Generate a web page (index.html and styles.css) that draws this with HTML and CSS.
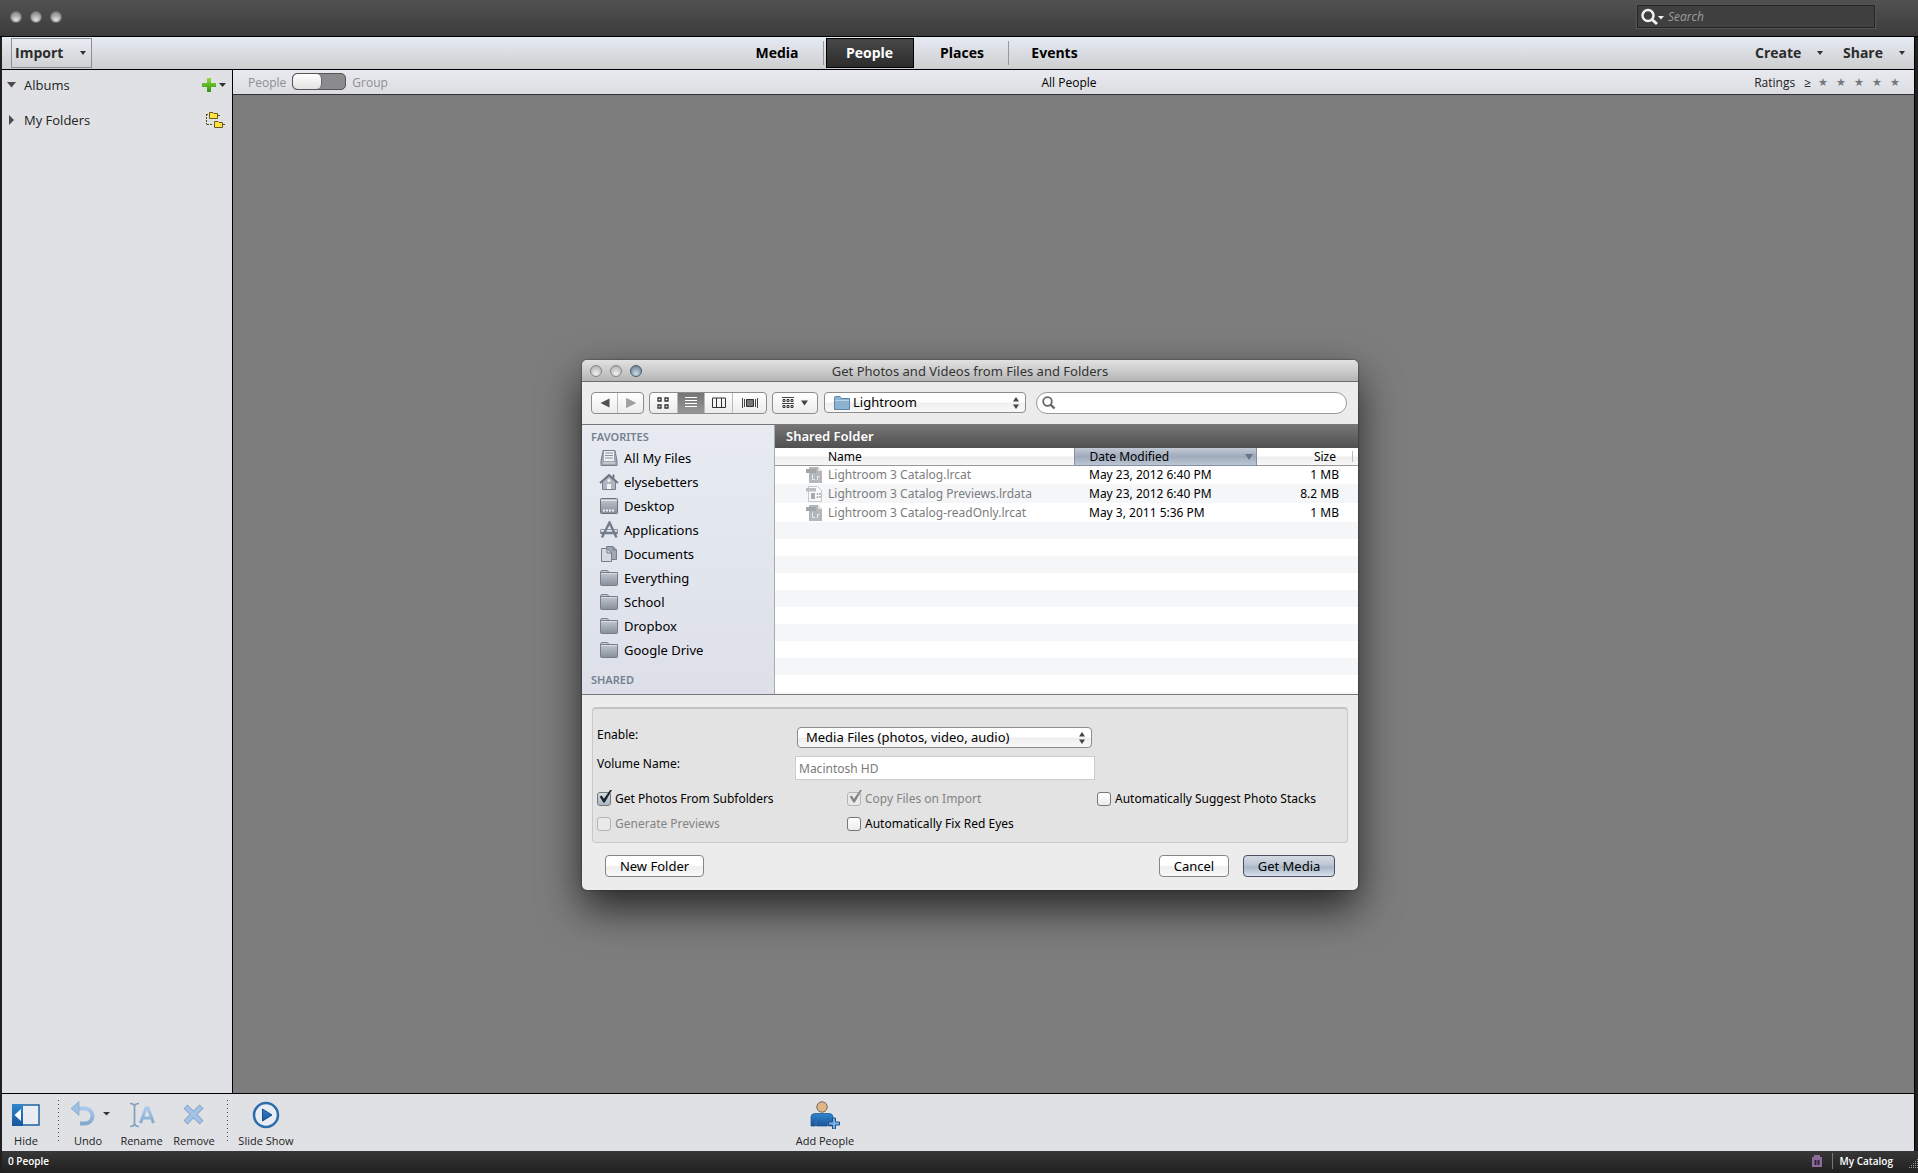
FILE: index.html
```html
<!DOCTYPE html>
<html lang="en">
<head>
<meta charset="utf-8">
<title>Organizer</title>
<link rel="stylesheet" href="styles.css">
</head>
<body>
<svg class="defs" width="0" height="0" aria-hidden="true">
  <defs>
    <linearGradient id="steel" x1="0" y1="0" x2="0" y2="1"><stop offset="0" stop-color="#c3c8d0"/><stop offset="1" stop-color="#868e9a"/></linearGradient>
    <linearGradient id="sky" x1="0" y1="0" x2="0" y2="1"><stop offset="0" stop-color="#a9c9ea"/><stop offset="1" stop-color="#85a9cf"/></linearGradient>
    <linearGradient id="deep" x1="0" y1="0" x2="0" y2="1"><stop offset="0" stop-color="#3186cf"/><stop offset="1" stop-color="#17569c"/></linearGradient>
    <linearGradient id="leaf" x1="0" y1="0" x2="0" y2="1"><stop offset="0" stop-color="#8fdc3e"/><stop offset="1" stop-color="#2f9410"/></linearGradient>
    <symbol id="folder" viewBox="0 0 20 18">
      <path d="M1.500 15.500V3.500Q1.500 1.500 3 1.500H8Q9.500 1.500 9.500 3.500" fill="#c9ced6" stroke="#7c8592"/>
      <path d="M1.500 3.500H18.500V15.500Q18.500 16.500 17.500 16.500H2.500Q1.500 16.500 1.500 15.500Z" fill="url(#steel)" stroke="#757e8b"/>
      <path d="M2 4.500H18" stroke="#d8dce2"/>
    </symbol>
    <symbol id="lrfile" viewBox="0 0 18 18">
      <path d="M4 1H13L17 5V17H4Z" fill="#b4b7ba"/><path d="M13 1V5H17Z" fill="#e3e5e7"/>
      <path d="M1 3H11V7H1Z" fill="#a3a6a9"/>
      <path d="M7.500 8.500V13.500H10M12.500 14V10.500H14.500" fill="none" stroke="#eceeef"/>
    </symbol>
  </defs>
</svg>
<div class="app">
  <header class="titlebar">
    <div class="lights"><i></i><i></i><i></i></div>
    <label class="search">
      <svg width="25" height="18" viewBox="0 0 25 18"><circle cx="8" cy="7.500" r="5.500" fill="none" stroke="#f2f2f2" stroke-width="2.400"/><path d="M12 11.500L17 16" stroke="#f2f2f2" stroke-width="3"/><path d="M18 8H24L21 11.500Z" fill="#f2f2f2"/></svg>
      <input type="text" placeholder="Search" aria-label="Search">
    </label>
  </header>

  <div class="toolbar">
    <button class="import">Import <i class="caret"></i></button>
    <nav class="tabs">
      <a href="#media">Media</a>
      <a href="#people" class="current">People</a>
      <a href="#places">Places</a>
      <a href="#events">Events</a>
    </nav>
    <div class="actions">
      <button>Create <i class="caret"></i></button>
      <button>Share <i class="caret"></i></button>
    </div>
  </div>

  <div class="workspace">
    <aside class="albums">
      <div class="tree-row">
        <svg width="10" height="10" viewBox="0 0 10 10"><path d="M1 2H10L5.500 7.500Z" fill="#4a4a4a"/></svg>
        <span>Albums</span>
        <button aria-label="New album">
          <svg width="24" height="16" viewBox="0 0 24 16"><path d="M5 1H9V6H14V10H9V15H5V10H0V6H5Z" fill="url(#leaf)"/><path d="M17 6H24L20.500 10Z" fill="#333"/></svg>
        </button>
      </div>
      <div class="tree-row">
        <svg width="10" height="10" viewBox="0 0 10 10"><path d="M3 0L8 5L3 10Z" fill="#4a4a4a"/></svg>
        <span>My Folders</span>
        <button aria-label="Folder view">
          <svg width="21" height="18" viewBox="0 0 21 18"><path d="M1.500 3V13.500M1 3.500H4M2 13.500H7M13 4.500H16M18 13.500H21" stroke="#5c4c10" stroke-dasharray="2 1" fill="none"/><path d="M4.500 7.500V1.500H8L9 2.500H12.500V7.500ZM9.500 16.500V10.500H13L14 11.500H17.500V16.500Z" fill="#ffe245" stroke="#6d5a12"/></svg>
        </button>
      </div>
    </aside>
    <main class="stage">
      <div class="subbar">
        <label class="switch">People <input type="checkbox" role="switch"> Group</label>
        <h1>All People</h1>
        <div class="ratings"><span>Ratings</span><b>≥</b>
          <button aria-label="1 star">★</button><button aria-label="2 stars">★</button><button aria-label="3 stars">★</button><button aria-label="4 stars">★</button><button aria-label="5 stars">★</button>
        </div>
      </div>
    </main>
  </div>

  <footer class="taskbar">
    <div class="task-group">
      <button class="task hide"><svg width="28" height="28" viewBox="0 0 28 28"><rect x="1" y="4" width="26" height="20" fill="#e9ecf2" stroke="#20609f" stroke-width="1.500"/><path d="M0 3H11V25H0Z" fill="url(#deep)"/><path d="M9 8V20L2.500 14Z" fill="#fff"/></svg>Hide</button>
      <i class="dots"></i>
      <button class="task undo"><svg width="40" height="28" viewBox="0 0 40 28"><path d="M7 7.500H15A7.500 7.500 0 0 1 15 22.500H10" fill="none" stroke="url(#sky)" stroke-width="4"/><path d="M9 .5V14.500L1 7.500Z" fill="#9dbfe3" stroke="#7e9dbf" stroke-width=".6"/><path d="M33 11H40L36.500 14.500Z" fill="#333"/></svg>Undo</button>
      <button class="task rename"><svg width="28" height="28" viewBox="0 0 28 28"><path d="M2 2.500Q6.500 2.500 6.500 6V22Q6.500 25.500 2 25.500M11 2.500Q6.500 2.500 6.500 6M6.500 22Q6.500 25.500 11 25.500" fill="none" stroke="#84a0bd" stroke-width="1.700"/><path d="M12.500 22L18 7H20L25.500 22M14.500 17H23.500" fill="none" stroke="url(#sky)" stroke-width="3"/></svg>Rename</button>
      <button class="task remove"><svg width="28" height="28" viewBox="0 0 28 28"><path d="M5.500 5.500L21.500 21.500M21.500 5.500L5.500 21.500" stroke="#7f9dbe" stroke-width="5.500"/><path d="M6 6L21 21M21 6L6 21" stroke="#a2c2e6" stroke-width="4"/></svg>Remove</button>
      <i class="dots near"></i>
      <button class="task slides"><svg width="28" height="28" viewBox="0 0 28 28"><circle cx="14" cy="14" r="12" fill="#e8ecf4" stroke="#2d6dab" stroke-width="2.500"/><path d="M10.500 8V20L20 14Z" fill="url(#deep)" stroke="#1a4f8b"/></svg>Slide Show</button>
    </div>
    <button class="task add"><svg width="30" height="28" viewBox="0 0 30 28"><circle cx="12" cy="6" r="5.200" fill="#dfb686" stroke="#6f6a66"/><path d="M1 25V16Q1 12.500 5 12.500H19Q23 12.500 23 16V25H18.500V18H17.500V25H6.500V18H5.500V25Z" fill="url(#deep)" stroke="#194d86" stroke-width=".7"/><path d="M22.500 17H25.500V21H29.500V24H25.500V28H22.500V24H18.500V21H22.500Z" fill="#77b0e8" stroke="#1f5288"/></svg>Add People</button>
  </footer>

  <div class="status">
    <span>0 People</span>
    <div class="catalog">
      <svg width="10" height="14" viewBox="0 0 10 14"><path d="M0 3H2V1H8V3H10V13H0Z" fill="#8b6a9d"/><path d="M3.500 6V11M6.500 6V11" stroke="#2f2237" stroke-width="2"/></svg>
      <span>My Catalog</span>
      <svg class="grip" width="11" height="11" viewBox="0 0 11 11"><path d="M10.500 1V11M8.500 3V11M6.500 5V11M4.500 7V11M2.500 9V11" stroke="#999" stroke-dasharray="1 1"/></svg>
    </div>
  </div>

  <section class="dialog" role="dialog" aria-labelledby="dialog-title">
    <div class="dialog-title">
      <div class="lights"><i></i><i></i><i class="zoom"></i></div>
      <h2 id="dialog-title">Get Photos and Videos from Files and Folders</h2>
    </div>
    <div class="dialog-tools">
      <div class="segments nav">
        <button aria-label="Back"><svg width="10" height="10" viewBox="0 0 10 10"><path d="M9.500 .5V9.500L.5 5Z" fill="#505050"/></svg></button>
        <button aria-label="Forward"><svg width="10" height="10" viewBox="0 0 10 10"><path d="M.5 .5V9.500L9.500 5Z" fill="#a0a0a0" stroke="#888" stroke-width=".6"/></svg></button>
      </div>
      <div class="segments views">
        <button aria-label="Icons"><svg width="12" height="12" viewBox="0 0 12 12"><path d="M1 1H4V4H1ZM8 1H11V4H8ZM1 8H4V11H1ZM8 8H11V11H8Z" fill="none" stroke="#333" stroke-width="1.300"/></svg></button>
        <button aria-label="List" class="on"><svg width="12" height="12" viewBox="0 0 12 12"><path d="M0 .5H12M0 3.500H12M0 6.500H12M0 9.500H12" stroke="#fff"/></svg></button>
        <button aria-label="Columns"><svg width="14" height="12" viewBox="0 0 14 12"><path d="M.5 1H13.500V10.500H.5ZM4.500 1V10.500M9.500 1V10.500" fill="none" stroke="#333"/></svg></button>
        <button aria-label="Cover flow" class="flow"><svg width="16" height="12" viewBox="0 0 16 12"><path d="M.5 1V11M2.500 2V10M13.500 2V10M15.500 1V11" stroke="#444"/><path d="M4.500 2.500H11.500V9.500H4.500Z" fill="#777" stroke="#333"/></svg></button>
      </div>
      <div class="segments arrange">
        <button aria-label="Arrange"><svg width="26" height="12" viewBox="0 0 26 12"><path d="M0 .5H12M0 6.500H12" stroke="#444"/><path d="M1 2.500H3V4.500H1ZM5 2.500H7V4.500H5ZM9 2.500H11V4.500H9ZM1 8.500H3V10.500H1ZM5 8.500H7V10.500H5ZM9 8.500H11V10.500H9Z" fill="none" stroke="#333"/><path d="M19 3.500H26L22.500 8.500Z" fill="#444"/></svg></button>
      </div>
      <div class="popup place">
        <svg class="popup-icon" width="18" height="16" viewBox="0 0 18 16"><path d="M1.500 4V2.500Q1.500 1.500 2.500 1.500H7L8.500 3.500H16.500V14.500H1.500Z" fill="#8db2d2" stroke="#5d83a6"/><path d="M2 5.500H16" stroke="#b9d3e8"/></svg>
        <select aria-label="Location"><option>Lightroom</option></select>
        <svg class="updown" width="6" height="12" viewBox="0 0 6 12"><path d="M0 4.500L3 0L6 4.500ZM0 7.500L3 12L6 7.500Z" fill="#444"/></svg>
      </div>
      <label class="find">
        <svg width="14" height="14" viewBox="0 0 14 14"><circle cx="5.500" cy="5.500" r="4.300" fill="none" stroke="#666" stroke-width="1.800"/><path d="M8.500 8.500L12.500 12.500" stroke="#666" stroke-width="2.400"/></svg>
        <input type="text" aria-label="Search files">
      </label>
    </div>

    <div class="browser">
      <aside class="places">
        <h3>FAVORITES</h3>
        <ul>
          <li><svg width="20" height="18" viewBox="0 0 20 18"><path d="M4 1.500H16L18 12V16.500H2V12Z" fill="#9fa7b3" stroke="#757e8b"/><path d="M5 2H15V12H5Z" fill="#eef0f3"/><path d="M6 4H14M6 6.500H14M6 9H14" stroke="#8a93a0"/><path d="M4 14H16" stroke="#e3e6ea"/></svg>All My Files</li>
          <li><svg width="20" height="18" viewBox="0 0 20 18"><path d="M3.500 8.500V16.500H16.500V8.500L10 3Z" fill="#aeb5c0" stroke="#757e8b"/><path d="M1 10L10 2L19 10M14.500 1.500V5" fill="none" stroke="#6b7482" stroke-width="1.800"/><path d="M8 16V11H12V16Z" fill="#f0f2f5"/><circle cx="10" cy="7.500" r="1.500" fill="#f0f2f5"/></svg>elysebetters</li>
          <li><svg width="20" height="18" viewBox="0 0 20 18"><rect x="1.500" y="1.500" width="17" height="15" rx="1" fill="url(#steel)" stroke="#69727f"/><path d="M2 3.500H18" stroke="#dfe3e8"/><path d="M4 13.500H16" stroke="#eef0f3" stroke-width="2" stroke-dasharray="2 1"/></svg>Desktop</li>
          <li><svg width="20" height="18" viewBox="0 0 20 18"><path d="M1.500 13V8.500H18.500V13" fill="none" stroke="#8d95a1"/><path d="M3 16.500L10.500 1.500L17.500 16.500M2 12H18" fill="none" stroke="#737c8a" stroke-width="2.400"/></svg>Applications</li>
          <li><svg width="20" height="18" viewBox="0 0 20 18"><path d="M7.500 1.500H14L17.500 5V14.500H7.500Z" fill="#9fa7b3" stroke="#757e8b"/><path d="M2.500 3.500H8L12.500 8V16.500H2.500Z" fill="#d6dae0" stroke="#757e8b"/><path d="M8 3.500V8H12.500M14 1.500V5H17.500" fill="none" stroke="#757e8b"/></svg>Documents</li>
          <li><svg width="20" height="18"><use href="#folder"/></svg>Everything</li>
          <li><svg width="20" height="18"><use href="#folder"/></svg>School</li>
          <li><svg width="20" height="18"><use href="#folder"/></svg>Dropbox</li>
          <li><svg width="20" height="18"><use href="#folder"/></svg>Google Drive</li>
        </ul>
        <h3>SHARED</h3>
      </aside>
      <div class="files">
        <h3>Shared Folder</h3>
        <table>
          <thead><tr><th class="name">Name</th><th class="date">Date Modified<i></i></th><th class="size">Size</th></tr></thead>
          <tbody>
            <tr><td class="name"><svg width="18" height="18"><use href="#lrfile"/></svg>Lightroom 3 Catalog.lrcat</td><td class="date">May 23, 2012 6:40 PM</td><td class="size">1 MB</td></tr>
            <tr><td class="name"><svg width="18" height="18" viewBox="0 0 18 18"><path d="M3.500 1.500H12.500L16.500 5.500V16.500H3.500Z" fill="#fafafa" stroke="#c4c6c8"/><path d="M1 3H11V6.500H1Z" fill="#bbbec0"/><path d="M6 8H10V14H6Z" fill="#a9acaf"/><path d="M12.500 8V14M15 8V14" stroke="#a9acaf" stroke-width="1.500" stroke-dasharray="2 1"/></svg>Lightroom 3 Catalog Previews.lrdata</td><td class="date">May 23, 2012 6:40 PM</td><td class="size">8.2 MB</td></tr>
            <tr><td class="name"><svg width="18" height="18"><use href="#lrfile"/></svg>Lightroom 3 Catalog-readOnly.lrcat</td><td class="date">May 3, 2011 5:36 PM</td><td class="size">1 MB</td></tr>
          </tbody>
        </table>
        <div class="stripes"></div>
      </div>
    </div>

    <form class="options">
      <div class="field"><label for="enable">Enable:</label>
        <div class="popup kind"><select id="enable"><option>Media Files (photos, video, audio)</option></select>
          <svg class="updown" width="6" height="12" viewBox="0 0 6 12"><path d="M0 4.500L3 0L6 4.500ZM0 7.500L3 12L6 7.500Z" fill="#444"/></svg></div>
      </div>
      <div class="field"><label for="volume">Volume Name:</label><input id="volume" type="text" value="Macintosh HD" disabled></div>
      <div class="checks">
        <label><input type="checkbox" checked>Get Photos From Subfolders</label>
        <label class="off"><input type="checkbox" checked disabled>Copy Files on Import</label>
        <label><input type="checkbox">Automatically Suggest Photo Stacks</label>
        <label class="off"><input type="checkbox" disabled>Generate Previews</label>
        <label><input type="checkbox">Automatically Fix Red Eyes</label>
      </div>
    </form>
    <div class="dialog-buttons">
      <button class="new">New Folder</button>
      <button class="cancel">Cancel</button>
      <button class="default">Get Media</button>
    </div>
  </section>
</div>
</body>
</html>
```
FILE: styles.css
```css
* { box-sizing: border-box; }
body { margin: 0; font: 13px/20px "Open Sans", sans-serif; color: #222; }
button, input, select { font: inherit; color: inherit; margin: 0; padding: 0; border: 0; background: none; }
h1, h2, h3, ul { margin: 0; padding: 0; font: inherit; list-style: none; }
a { color: inherit; text-decoration: none; }
svg { display: block; flex: none; }
.defs { position: absolute; }

.app { position: relative; display: flex; flex-direction: column; min-height: 100vh; padding: 0 3px 0 2px; background: #202020; }

/* application title bar */
.titlebar { display: flex; align-items: center; justify-content: space-between; height: 37px; margin: 0 -3px 0 -2px; padding: 0 43px 3px 10px; background: linear-gradient(#515151, #3c3c3c); border-bottom: 1px solid #000; }
.lights { display: flex; gap: 8px; }
.lights i { width: 12px; height: 12px; border-radius: 50%; background: radial-gradient(circle at 50% 75%, #e0e0e0, #8b8b8b 75%); border: 1px solid #6d6d6d; }
.search { display: flex; align-items: center; width: 238px; height: 23px; padding-left: 2px; border: 1px solid #222; outline: 1px solid #555; background: #404040; }
.search input { flex: 1; min-width: 0; margin-left: 3px; font-size: 12px; font-style: italic; }
.search input::placeholder { color: #9c9c9c; opacity: 1; }

/* mode tabs */
.toolbar { display: flex; align-items: center; height: 33px; padding-left: 9px; background: linear-gradient(#e6eaf3, #cdcecf); border-bottom: 1px solid #000; border-right: 1px solid #000; font-weight: 700; font-size: 14px; }
.caret { width: 0; height: 0; border: 3px solid transparent; border-top: 4px solid #333; border-bottom: 0; }
.toolbar button { display: flex; align-items: center; justify-content: space-between; font-weight: 700; color: #2c2c2c; }
.toolbar .import { width: 81px; height: 30px; border: 1px solid #8b8e94; background: linear-gradient(#e9ecf3, #d0d1d3); padding: 0 5px 0 3px; }
.tabs { flex: 1; display: flex; justify-content: center; align-items: center; color: #000; }
.tabs a { display: flex; align-items: center; justify-content: center; width: 92px; height: 24px; border-right: 1px solid #96989c; }
.tabs a:last-child { border: 0; }
.tabs .current { width: 88px; height: 30px; margin: 0 3px 0 2px; color: #fff; border: 1px solid #000; background: linear-gradient(#484848, #2c2c2c); }
.actions { display: flex; gap: 20px; width: 174px; padding-right: 9px; justify-content: flex-end; }
.actions button { width: 68px; }
.actions button:last-child { width: 62px; }

/* sidebar and stage */
.workspace { flex: 1; display: flex; border-right: 1px solid #000; }
.albums { width: 231px; background: #dfe1e5; border-right: 1px solid #000; padding: 5px 6px 0 4px; display: flex; flex-direction: column; gap: 15px; }
.tree-row { display: flex; align-items: center; gap: 8px; height: 20px; }
.tree-row button { margin-left: auto; }
.stage { flex: 1; background: #7d7d7d; }
.subbar { display: flex; align-items: center; height: 25px; padding: 1px 10px 0 15px; background: linear-gradient(#e8eaf1, #dcdde0); border-bottom: 1px solid #333; font-size: 12px; }
.switch { display: flex; align-items: center; gap: 6px; color: #8d8f93; }
.switch input { appearance: none; width: 54px; height: 17px; margin-bottom: 2px; border-radius: 5px; background: #8b8b8d; border: 1px solid #555; }
.switch input::before { content: ""; display: block; width: 28px; height: 15px; border-radius: 5px; border-right: 1px solid #666; background: linear-gradient(#fff, #e2e2e2); }
.subbar h1 { flex: 1; text-align: center; color: #000; }
.ratings { display: flex; align-items: center; padding-left: 4px; }
.ratings b { font-weight: 400; margin: 0 3px 0 9px; color: #000; }
.ratings button { width: 18px; font: 11px/20px "DejaVu Sans", sans-serif; color: #77797d; }

/* bottom task bar */
.taskbar { display: flex; height: 58px; background: #dfe1e5; border-top: 1px solid #000; border-right: 1px solid #000; font-size: 11px; }
.task-group { display: flex; width: 41%; padding-left: 1px; }
.task { display: flex; flex-direction: column; align-items: center; gap: 4px; padding-top: 7px; line-height: 16px; white-space: nowrap; }
.hide { width: 46px; }
.undo { width: 58px; }
.undo svg { margin-left: 4px; }
.rename { width: 49px; }
.remove { width: 56px; }
.slides { width: 76px; }
.add { width: 78px; }
.dots { width: 10px; height: 42px; margin-top: 6px; background: repeating-linear-gradient(#444 0 1px, transparent 1px 4px) right top / 1px 100% no-repeat; }
.dots.near { width: 6px; }
.status { display: flex; justify-content: space-between; align-items: center; height: 22px; padding: 0 0 2px 6px; margin-right: -3px; background: linear-gradient(#373737, #202020); color: #fff; font-size: 10px; font-weight: 600; }
.catalog { display: flex; align-items: center; gap: 10px; }
.catalog span { border-left: 1px solid #777; padding-left: 7px; line-height: 16px; }
.grip { align-self: flex-end; margin-left: 4px; }

/* file dialog */
.dialog { position: absolute; top: 360px; left: calc(50% - 377px); width: 776px; border-radius: 5px; background: #ececec; box-shadow: 0 0 2px #222, 0 18px 42px rgba(0,0,0,.7); font: 12px/18px "Noto Sans", sans-serif; color: #000; overflow: hidden; }
.dialog-title { display: grid; grid-template-columns: 1fr auto 1fr; align-items: center; height: 22px; padding: 0 8px; background: linear-gradient(#e2e2e2, #b5b5b5); border-bottom: 1px solid #6c6c6c; }
.dialog-title h2 { font-size: 13px; color: #333; }
.dialog-title .lights i { background: radial-gradient(circle at 50% 75%, #f0f0f0, #b5b5b5 80%); border-color: #858585; }
.dialog-title .lights .zoom { background: radial-gradient(circle at 50% 75%, #cbdbe6, #71879a 80%); border-color: #4c5b69; }
.dialog-tools { display: flex; height: 42px; padding: 10px 11px 0 9px; }
.segments { display: flex; height: 22px; border: 1px solid #8c8c8c; border-radius: 4px; background: linear-gradient(#fff, #ececec); overflow: hidden; }
.segments button { flex: 1; display: flex; align-items: center; justify-content: center; }
.segments button + button { border-left: 1px solid #bbb; }
.segments .on { background: linear-gradient(#757575, #969696); }
.segments .flow { flex: 0 0 34px; }
.nav { width: 53px; margin-right: 5px; }
.views { width: 118px; margin-right: 5px; }
.arrange { width: 46px; margin-right: 6px; }
.popup { position: relative; height: 21px; border: 1px solid #8c8c8c; border-radius: 4px; background: linear-gradient(#fff 45%, #efefef 55%, #f8f8f8); font-size: 13px; }
.popup select { appearance: none; width: 100%; height: 19px; line-height: 19px; padding-left: 8px; }
.popup svg { position: absolute; pointer-events: none; }
.popup .popup-icon { left: 8px; top: 2px; }
.popup .updown { right: 6px; top: 4px; }
.place { width: 202px; margin-right: 10px; }
.place select { padding-left: 28px; }
.find { flex: 1; display: flex; align-items: center; height: 22px; padding: 0 10px 0 5px; gap: 6px; border: 1px solid #999; border-radius: 11px; background: #fff; }
.find input { flex: 1; }

.browser { display: flex; height: 271px; border-top: 1px solid #777; border-bottom: 1px solid #777; }
.places { width: 193px; padding: 2px 9px 0; border-right: 1px solid #aaa; background: linear-gradient(#e7ebf1, #dde0e9); font-size: 13px; }
.places h3 { font-size: 11px; line-height: 19px; font-weight: 600; color: #768290; }
.places ul { margin-bottom: 8px; }
.places li { display: flex; align-items: center; gap: 5px; height: 24px; padding-left: 8px; }
.files { flex: 1; display: flex; flex-direction: column; background: #fff; }
.files h3 { height: 23px; padding-left: 11px; line-height: 22px; font-size: 13px; font-weight: 600; color: #fff; background: linear-gradient(#757575, #505050); }
table { width: 100%; border-collapse: collapse; table-layout: fixed; }
th, td { padding: 0; font-weight: 400; text-align: left; white-space: nowrap; }
th { height: 17px; line-height: 15px; background: linear-gradient(#fff 45%, #efefef 55%, #f6f6f6); border-bottom: 1px solid #999; }
td { height: 19px; line-height: 17px; }
th.name { width: 299px; padding-left: 53px; }
th.date { width: 182px; background: linear-gradient(#c3cad5, #9faabb 50%, #bac6d3); border: 1px solid #8590a2; border-top: 0; }
.date { padding-left: 15px; }
th i { float: right; margin: 5px 3px 0 0; border: 4px solid transparent; border-top: 6px solid #67758a; border-bottom: 0; }
.size { padding-right: 19px; text-align: right; }
th.size { padding-right: 22px; background: linear-gradient(#bbb, #bbb) right 5px center / 1px 11px no-repeat, linear-gradient(#fff 45%, #efefef 55%, #f6f6f6); }
td.name { color: #7c7c7c; padding-left: 30px; }
td.name svg { display: inline-block; vertical-align: top; margin-right: 5px; }
tbody tr:nth-child(even) { background: #f4f6f8; }
.stripes { flex: 1; background: repeating-linear-gradient(#f4f6f8 0 17px, #fff 17px 34px); }

.options { display: flex; flex-direction: column; margin: 12px 10px 0; padding: 18px 4px 0; height: 136px; border: 1px solid #c9c9c9; border-top: 2px solid #c3c3c3; border-radius: 4px; background: #e3e3e3; }
.field { display: grid; grid-template-columns: 200px 1fr; height: 29px; }
.field label { line-height: 16px; }
.kind { width: 295px; }
.field > input { width: 300px; height: 24px; margin-left: -2px; padding: 0 3px; border: 1px solid #ccc; background: #fff; color: #7a7a7a; }
.checks { display: grid; grid-template-columns: 250px 250px 1fr; grid-auto-rows: 25px; margin-top: 1px; }
.checks label { display: flex; align-items: center; gap: 4px; white-space: nowrap; }
.checks input { appearance: none; position: relative; width: 14px; height: 14px; border: 1px solid #777; border-radius: 3px; background: linear-gradient(#fff, #ececec); }
.checks input:checked { background: linear-gradient(#d5dce4, #aab6c4); }
.checks input:checked::after { content: ""; position: absolute; left: 1px; top: -3px; width: 13px; height: 14px; background: #1d232c; clip-path: polygon(5% 50%, 20% 42%, 38% 66%, 88% 0, 100% 4%, 45% 92%, 33% 92%); }
.checks .off { color: #838383; }
.checks .off input { border-color: #b5b5b5; background: #e9e9e9; }
.checks .off input:checked::after { background: #858585; }
.dialog-buttons { display: flex; padding: 12px 23px 13px; }
.dialog-buttons button { height: 22px; border: 1px solid #858585; border-radius: 4px; background: linear-gradient(#fff 45%, #efefef 55%, #f8f8f8); font-size: 13px; }
.new { width: 99px; margin-right: auto; }
.cancel { width: 70px; margin-right: 14px; }
.default { width: 92px; }
.dialog-buttons .default { border-color: #4d5066; background: linear-gradient(#d5dbe2, #bcc6d3 45%, #a9b6c7 55%, #d6e0ea); }
```
